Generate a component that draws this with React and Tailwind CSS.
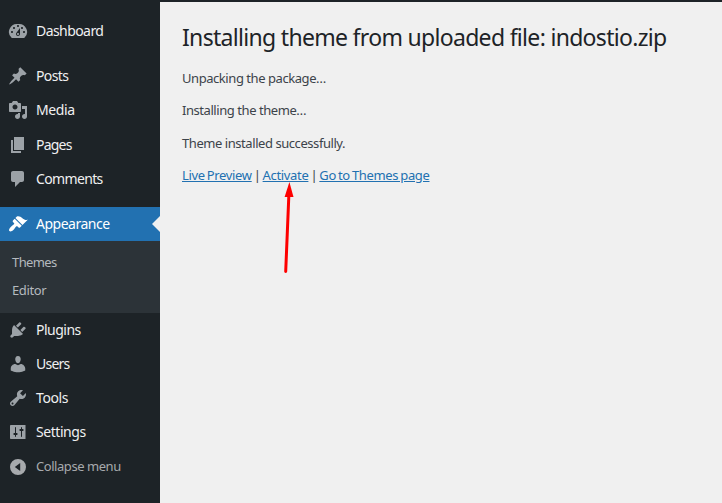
const icons = {
  dashboard:
    'M3.76 17h12.48A7.998 7.998 0 0 0 10 3a8 8 0 0 0-6.24 14zM10 4c.55 0 1 .45 1 1s-.45 1-1 1-1-.45-1-1 .45-1 1-1zM6 6c.55 0 1 .45 1 1s-.45 1-1 1-1-.45-1-1 .45-1 1-1zm8 0c.55 0 1 .45 1 1s-.45 1-1 1-1-.45-1-1 .45-1 1-1zm-5.37 5.55L12 7v6c0 1.1-.9 2-2 2s-2-.9-2-2c0-.57.24-1.08.63-1.45zM4 10c.55 0 1 .45 1 1s-.45 1-1 1-1-.45-1-1 .45-1 1-1zm12 0c.55 0 1 .45 1 1s-.45 1-1 1-1-.45-1-1 .45-1 1-1zm-5 3c0-.55-.45-1-1-1s-1 .45-1 1 .45 1 1 1 1-.45 1-1z',
  posts:
    'M10.44 3.02l1.82-1.82 6.36 6.35-1.83 1.82c-1.05-.68-2.48-.57-3.41.36l-.75.75c-.92.93-1.04 2.35-.35 3.41l-1.83 1.82-2.41-2.41-2.8 2.79c-.42.42-3.38 2.71-3.8 2.29s1.86-3.39 2.28-3.81l2.79-2.79L4.1 9.36l1.83-1.82c1.05.69 2.48.57 3.4-.36l.75-.75c.93-.92 1.05-2.35.36-3.41z',
  media:
    'M13 11V4c0-.55-.45-1-1-1h-1.67L9 1H5L3.67 3H2c-.55 0-1 .45-1 1v7c0 .55.45 1 1 1h10c.55 0 1-.45 1-1zM7 4.5c1.38 0 2.5 1.12 2.5 2.5S8.38 9.5 7 9.5 4.5 8.38 4.5 7 5.62 4.5 7 4.5zM14 6h5v10.5c0 1.38-1.12 2.5-2.5 2.5S14 17.88 14 16.5s1.12-2.5 2.5-2.5c.17 0 .34.02.5.05V9h-3V6zm-4 8.05V13h2v3.5c0 1.38-1.12 2.5-2.5 2.5S7 17.88 7 16.5 8.12 14 9.5 14c.17 0 .34.02.5.05z',
  pages: 'M6 15V2h10v13H6zm-1 1h8v2H3V5h2v11z',
  comments: 'M5 2h9c1.1 0 2 .9 2 2v7c0 1.1-.9 2-2 2h-2l-5 5v-5H5c-1.1 0-2-.9-2-2V4c0-1.1.9-2 2-2z',
  appearance:
    'M14.48 11.06L7.41 3.99l1.5-1.5c.5-.56 2.3-.47 3.51.32 1.21.8 1.43 1.28 2.91 2.1 1.18.64 2.45 1.26 4.45.85zm-.71.71L6.7 4.7 4.93 6.47c-.39.39-.39 1.02 0 1.41l1.06 1.06c.39.39.39 1.03 0 1.42-.6.6-1.43 1.11-2.21 1.69-.35.26-.7.53-1.01.84C1.43 14.23.4 16.08 1.4 17.07c.99 1 2.84-.03 4.18-1.36.31-.31.58-.66.85-1.02.57-.78 1.08-1.61 1.69-2.21.39-.39 1.02-.39 1.41 0l1.06 1.06c.39.39 1.02.39 1.41 0z',
  plugins:
    'M13.11 4.36L9.87 7.6 8 5.73l3.24-3.24c.35-.34 1.05-.2 1.56.32.52.51.66 1.21.31 1.55zM5.11 6.13l.91-1.12 9.01 9.01-1.19.84c-.71.71-2.63 1.16-3.82 1.16H6.14L4.9 17.26c-.59.59-1.54.59-2.12 0-.59-.58-.59-1.53 0-2.12l1.24-1.24v-3.88c0-1.13.4-3.19 1.09-3.89zm9.13 5.84l-1.87-1.87 3.24-3.24c.34-.35 1.04-.21 1.55.31.52.51.66 1.21.31 1.55z',
  users:
    'M10 9.25c-2.27 0-2.73-3.44-2.73-3.44C7 4.02 7.82 2 9.97 2c2.16 0 2.98 2.02 2.71 3.81 0 0-.41 3.44-2.68 3.44zM10 11.3L12.72 10c2.39 0 4.52 2.33 4.52 4.53v1.9s-3 1.72-7.24 1.72c-4.24 0-7.24-1.72-7.24-1.72v-1.9c0-2.25 1.94-4.48 4.47-4.48z',
  tools:
    'M16.68 9.77c-1.34 1.34-3.3 1.67-4.95.99l-5.41 6.52c-.99.99-2.59.99-3.58 0s-.99-2.59 0-3.57l6.52-5.42c-.68-1.65-.35-3.61.99-4.95 1.28-1.28 3.12-1.62 4.72-1.06l-2.89 2.89 2.82 2.82 2.86-2.87c.53 1.58.18 3.39-1.08 4.65zM3.81 16.21c.4.39 1.04.39 1.43 0 .4-.4.4-1.04 0-1.43-.39-.4-1.03-.4-1.43 0-.39.39-.39 1.03 0 1.43z',
  settings:
    'M17.5 17V3H3c-.55 0-1 .45-1 1v12c0 .55.45 1 1 1zM8 11h.6c.55 0 1 .45 1 1s-.45 1-1 1H8v1.5c0 .28-.22.5-.5.5s-.5-.22-.5-.5V13h-.6c-.55 0-1-.45-1-1s.45-1 1-1H7V5.5c0-.28.22-.5.5-.5s.5.22.5.5V11zm5-2h-.6c-.55 0-1-.45-1-1s.45-1 1-1h.6V5.5c0-.28.22-.5.5-.5s.5.22.5.5V7h.6c.55 0 1 .45 1 1s-.45 1-1 1H14v5.5c0 .28-.22.5-.5.5s-.5-.22-.5-.5V9z',
  collapse: 'M10 2a8 8 0 1 0 0 16 8 8 0 0 0 0-16zM12.2 6v8L6.8 10z',
};

function MenuItem({ icon, label, className = 'text-[#f0f0f1]', iconClass = 'text-[#9ca2a7]', textClass = 'text-sm' }) {
  return (
    <a className={`flex h-[34.2px] shrink-0 items-center gap-2 pl-2 ${className}`}>
      <svg viewBox="0 0 20 20" className={`size-5 shrink-0 ${iconClass}`} fill="currentColor" fillRule="evenodd">
        <path d={icons[icon]} />
      </svg>
      <span className={`whitespace-nowrap ${textClass}`}>{label}</span>
    </a>
  );
}

export default function App() {
  return (
    <div className="flex h-[503px] w-[722px] overflow-hidden bg-[#1d2327] font-['Noto_Sans','Open_Sans',sans-serif]">
      <nav className="flex w-40 shrink-0 flex-col pt-3.5">
        <MenuItem icon="dashboard" label="Dashboard" textClass="text-sm tracking-[-0.57px]" />
        <div className="mt-[11px] flex flex-col">
          <MenuItem icon="posts" label="Posts" textClass="text-sm tracking-[-0.6px]" />
          <MenuItem icon="media" label="Media" textClass="text-sm tracking-[-0.4px]" />
          <MenuItem icon="pages" label="Pages" textClass="text-sm tracking-[-0.8px]" />
          <MenuItem icon="comments" label="Comments" textClass="text-sm tracking-[-0.65px]" />
        </div>
        <div className="relative mt-[11px] h-[34px]">
          <MenuItem
            icon="appearance"
            label="Appearance"
            className="bg-[#2271b1] text-white"
            iconClass="text-white"
            textClass="text-sm tracking-[-0.5px]"
          />
          <span className="absolute right-0 top-[9px] border-y-8 border-r-8 border-y-transparent border-r-[#f0f0f0]" />
        </div>
        <div className="flex h-[72px] shrink-0 flex-col bg-[#2c3338] pl-3 pt-[7px] text-[13px] leading-7 text-[#b4b9be]">
          <a className="tracking-[-0.6px]">Themes</a>
          <a className="tracking-[-0.4px]">Editor</a>
        </div>
        <MenuItem icon="plugins" label="Plugins" textClass="text-sm tracking-[-0.5px]" />
        <MenuItem icon="users" label="Users" textClass="text-sm tracking-[-0.75px]" />
        <MenuItem icon="tools" label="Tools" textClass="text-sm tracking-[-0.4px]" />
        <div className="-mt-[0.6px] flex flex-col gap-[0.6px]">
          <MenuItem icon="settings" label="Settings" textClass="text-sm tracking-[-0.45px]" />
          <MenuItem
            icon="collapse"
            label="Collapse menu"
            className="text-[#a7aaad]"
            iconClass="text-[#a7aaad]"
            textClass="text-[13px] tracking-[-0.45px]"
          />
        </div>
      </nav>
      <main className="relative mt-0.5 flex-1 bg-[#f0f0f0] pl-[22px] pt-5 text-[#3c434a]">
        <h1 className="whitespace-nowrap text-[23px] leading-[30px] tracking-[-0.69px] text-[#1d2327]">
          Installing theme from uploaded file: indostio.zip
        </h1>
        <div className="mt-4 flex flex-col gap-[12.4px] whitespace-nowrap text-[13px] leading-5 tracking-[-0.44px]">
          <p>Unpacking the package…</p>
          <p>Installing the theme…</p>
          <p>Theme installed successfully.</p>
          <p className="tracking-[-0.34px] [word-spacing:-1px]">
            <a className="text-[#2271b1] underline">Live Preview</a> | <a className="text-[#2271b1] underline">Activate</a> |{' '}
            <a className="text-[#2271b1] underline">Go to Themes page</a>
          </p>
        </div>
        {/* Pointer to the Activate link */}
        <svg viewBox="0 0 12 94" className="absolute left-[123px] top-[179px] h-[94px] w-3" fill="#fe0000">
          <path d="M6.4 1L10.5 16H1.6z" />
          <path d="M5.9 13L2.7 90.5" stroke="#fe0000" strokeWidth="3" strokeLinecap="round" />
        </svg>
      </main>
    </div>
  );
}
